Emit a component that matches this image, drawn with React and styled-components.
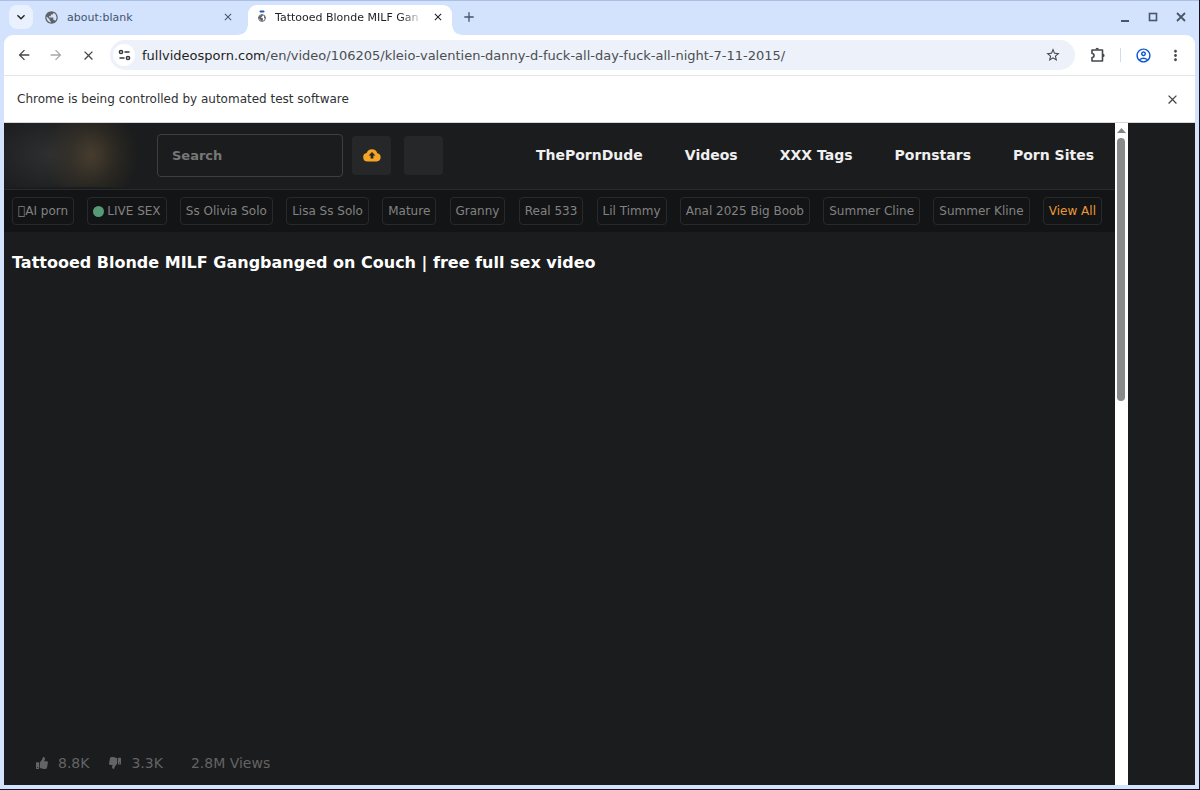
import React from 'react';
import styled, { createGlobalStyle } from 'styled-components';
import {
  MdAdd,
  MdArrowBack,
  MdArrowForward,
  MdClose,
  MdKeyboardArrowDown,
  MdMoreVert,
  MdOutlineAccountCircle,
  MdPublic,
  MdStarBorder,
} from 'react-icons/md';
import { FaThumbsDown, FaThumbsUp } from 'react-icons/fa';

const tags = [
  { title: '\uE000AI porn' },
  { title: 'LIVE SEX', live: true },
  { title: 'Ss Olivia Solo' },
  { title: 'Lisa Ss Solo' },
  { title: 'Mature' },
  { title: 'Granny' },
  { title: 'Real 533' },
  { title: 'Lil Timmy' },
  { title: 'Anal 2025 Big Boob' },
  { title: 'Summer Cline' },
  { title: 'Summer Kline' },
  { title: 'View All', accent: true },
];

const links = ['ThePornDude', 'Videos', 'XXX Tags', 'Pornstars', 'Porn Sites'];

const LoadingGlobe = () => (
  <svg width="10" height="14" viewBox="0 0 10 14">
    <rect x="2.500" y="0.500" width="5" height="2" rx="1" fill="#1a5fb4" />
    <circle cx="5" cy="8" r="3.400" fill="#fff" stroke="#5f6368" strokeWidth="1" />
    <path d="M2 6.500l3-2 1 1-2 2 2 1v2l-2 .5-1-2-2-1z" fill="#5f6368" />
    <path d="M7 5.500l1.500 2-1.500 1z" fill="#5f6368" />
  </svg>
);

const Tune = () => (
  <svg width="13" height="12" viewBox="0 0 13 12" fill="none" stroke="#33363a" strokeWidth="1.500">
    <circle cx="3" cy="3" r="1.600" />
    <path d="M6.500 3H11.500M1.500 9h5" />
    <circle cx="10" cy="9" r="1.600" />
  </svg>
);

const Puzzle = () => (
  <svg width="16" height="16" viewBox="0 0 16 16" fill="none" stroke="#45484c" strokeWidth="1.600" strokeLinejoin="round">
    <path d="M2 3h10.500v11H2v-3.500a2 2 0 0 0 0-4z" />
    <path d="M5.500 2.500a1.700 1.700 0 0 1 3.400 0zM13 6.800a1.600 1.600 0 0 1 0 3.200z" fill="#45484c" stroke="none" />
  </svg>
);

const Cloud = () => (
  <svg width="18" height="14" viewBox="0 0 18 14">
    <path
      d="M4.500 13.500A4.300 4.300 0 0 1 3.600 5 5.600 5.600 0 0 1 14.300 5.200 4.200 4.200 0 0 1 13.800 13.500z"
      fill="#f5a524"
    />
    <path d="M9 4L12.400 7.600H10.400V10.400H7.600V7.600H5.600z" fill="#262728" />
  </svg>
);

const App = () => (
  <Frame>
    <GlobalStyle />
    <TabStrip>
      <TabSearch aria-label="Search tabs"><MdKeyboardArrowDown size={16} /></TabSearch>
      <Tab>
        <MdPublic size={15} color="#5f6368" />
        <TabTitle>about:blank</TabTitle>
        <TabClose aria-label="Close tab"><MdClose size={12} /></TabClose>
      </Tab>
      <Tab $active>
        <LoadingGlobe />
        <TabTitle $fade>Tattooed Blonde MILF Gan</TabTitle>
        <TabClose aria-label="Close tab"><MdClose size={12} /></TabClose>
      </Tab>
      <NewTab aria-label="New tab"><MdAdd size={16} /></NewTab>
      <WindowButtons>
        <WindowButton aria-label="Minimize">
          <svg width="10" height="10" viewBox="0 0 10 10"><path d="M1 9h8" stroke="#4a5568" strokeWidth="2" /></svg>
        </WindowButton>
        <WindowButton aria-label="Maximize">
          <svg width="10" height="10" viewBox="0 0 10 10"><rect x="1.500" y="1.500" width="7" height="7" fill="none" stroke="#4a5568" strokeWidth="1.600" /></svg>
        </WindowButton>
        <WindowButton aria-label="Close">
          <svg width="10" height="10" viewBox="0 0 10 10"><path d="M1 1l8 8M9 1l-8 8" stroke="#4a5568" strokeWidth="1.800" /></svg>
        </WindowButton>
      </WindowButtons>
    </TabStrip>

    <Toolbar>
      <ToolButton aria-label="Back"><MdArrowBack size={16} /></ToolButton>
      <ToolButton aria-label="Forward" disabled><MdArrowForward size={16} /></ToolButton>
      <ToolButton aria-label="Stop"><MdClose size={15} /></ToolButton>
      <Omnibox>
        <SiteInfo aria-label="Site information"><Tune /></SiteInfo>
        <Url>
          <b>fullvideosporn.com</b>
          /en/video/106205/kleio-valentien-danny-d-fuck-all-day-fuck-all-night-7-11-2015/
        </Url>
        <ToolButton aria-label="Bookmark"><MdStarBorder size={16} /></ToolButton>
      </Omnibox>
      <Actions>
        <ToolButton aria-label="Extensions"><Puzzle /></ToolButton>
        <Divider />
        <ToolButton aria-label="Profile" $blue><MdOutlineAccountCircle size={17} /></ToolButton>
        <ToolButton aria-label="Menu"><MdMoreVert size={17} /></ToolButton>
      </Actions>
    </Toolbar>

    <InfoBar>
      Chrome is being controlled by automated test software
      <ToolButton aria-label="Dismiss"><MdClose size={15} /></ToolButton>
    </InfoBar>

    <Viewport>
      <Page>
        <Header>
          <Logo href="#" aria-label="Home" />
          <SearchInput type="text" placeholder="Search" aria-label="Search" />
          <HeaderButton aria-label="Upload"><Cloud /></HeaderButton>
          <HeaderButton aria-label="Account" />
          <Nav>
            {links.map(link => <NavLink href="#" key={link}>{link}</NavLink>)}
          </Nav>
        </Header>
        <TagBar>
          {tags.map(tag => (
            <Tag href="#" key={tag.title} $accent={tag.accent}>
              {tag.live && <Dot />}
              {tag.title}
            </Tag>
          ))}
        </TagBar>
        <Title>Tattooed Blonde MILF Gangbanged on Couch | free full sex video</Title>
        <Stats>
          <Vote><FaThumbsUp size={12} />8.8K</Vote>
          <Vote><ThumbsDown size={12} />3.3K</Vote>
          <Views>2.8M Views</Views>
        </Stats>
      </Page>
      <ScrollTrack>
        <svg width="9" height="5" viewBox="0 0 9 5"><path d="M0 5L4.500 0 9 5z" fill="#858585" /></svg>
        <ScrollThumb />
      </ScrollTrack>
      <Gutter />
    </Viewport>
  </Frame>
);

const GlobalStyle = createGlobalStyle`
  * {
    box-sizing: border-box;
  }
  body {
    margin: 0;
    background: #10141f;
    font-family: 'DejaVu Sans', sans-serif;
  }
  button {
    border: 0;
    padding: 0;
    background: none;
    color: inherit;
    font: inherit;
  }
  a {
    text-decoration: none;
  }
  svg {
    flex: none;
  }
`;

const Frame = styled.div`
  display: flex;
  flex-direction: column;
  height: calc(100vh - 1px);
  margin-right: 1px;
  padding: 0 4px 4px 4px;
  border-top: 1px solid #a9c0e4;
  background: #d3e3fd;
  font-size: 12px;
`;

const TabStrip = styled.div`
  display: flex;
  align-items: center;
  flex: none;
  height: 34px;
  padding: 0 0 2px 5px;
  color: #44546f;
`;

const TabSearch = styled.button`
  display: flex;
  align-items: center;
  justify-content: center;
  width: 24px;
  height: 24px;
  border-radius: 8px;
  background: #e9f1fe;
  color: #1f1f1f;
`;

const Tab = styled.div`
  position: relative;
  display: flex;
  align-items: center;
  gap: 8px;
  width: ${props => (props.$active ? 204 : 215)}px;
  height: 32px;
  padding: 0 ${props => (props.$active ? '8px 4px 9px' : '14px 0 11px')};
  color: ${props => (props.$active ? '#1f1f1f' : '#44546f')};
  font-size: 11px;
  ${props => props.$active && `
    align-self: flex-end;
    height: 30px;
    margin-bottom: -2px;
    padding-bottom: 6px;
    border-radius: 9px 9px 0 0;
    background: #fff;
    &::before,
    &::after {
      content: '';
      position: absolute;
      bottom: 0;
      width: 9px;
      height: 9px;
    }
    &::before {
      right: 100%;
      background: radial-gradient(circle at 0 0, transparent 8px, #fff 9px);
    }
    &::after {
      left: 100%;
      background: radial-gradient(circle at 100% 0, transparent 8px, #fff 9px);
    }
  `}
`;

const TabTitle = styled.span`
  flex: 1;
  white-space: nowrap;
  ${props => props.$fade && 'mask-image: linear-gradient(to right, #000 85%, transparent);'}
`;

const TabClose = styled.button`
  display: flex;
`;

const NewTab = styled.button`
  display: flex;
  margin-left: 9px;
`;

const WindowButtons = styled.div`
  display: flex;
  gap: 18px;
  margin-left: auto;
  padding-right: 9px;
`;

const WindowButton = styled.button`
  display: flex;
`;

const Toolbar = styled.div`
  display: flex;
  align-items: center;
  flex: none;
  height: 41px;
  padding: 0 10px;
  border-bottom: 1px solid #e4e7ea;
  border-radius: 9px 9px 0 0;
  background: #fff;
`;

const ToolButton = styled.button`
  display: flex;
  align-items: center;
  justify-content: center;
  width: 20px;
  height: 24px;
  color: ${props => (props.$blue ? '#0b57d0' : '#45484c')};
  &:disabled {
    color: #a6a8ab;
  }
  ${Toolbar} > & {
    margin-right: 12px;
  }
`;

const Omnibox = styled.div`
  display: flex;
  align-items: center;
  flex: 1;
  height: 30px;
  padding: 0 12px 0 3px;
  border-radius: 15px;
  background: #edf1f9;
`;

const SiteInfo = styled.button`
  display: flex;
  align-items: center;
  justify-content: center;
  width: 22px;
  height: 22px;
  margin-right: 7px;
  border-radius: 11px;
  background: #fff;
`;

const Url = styled.span`
  flex: 1;
  color: #4b4e52;
  font-size: 13px;
  white-space: nowrap;
  b {
    color: #1f1f1f;
    font-weight: normal;
  }
`;

const Actions = styled.div`
  display: flex;
  align-items: center;
  gap: 12px;
  margin-left: 13px;
`;

const Divider = styled.div`
  width: 1px;
  height: 14px;
  background: #d3dbe8;
`;

const InfoBar = styled.div`
  display: flex;
  align-items: center;
  justify-content: space-between;
  flex: none;
  height: 47px;
  padding: 0 13px;
  border-bottom: 1px solid #d5d7da;
  background: #fff;
  color: #303134;
`;

const Viewport = styled.div`
  display: flex;
  flex: 1;
  min-height: 0;
  background: #1b1c1d;
`;

const Page = styled.div`
  display: flex;
  flex-direction: column;
  flex: 1;
  min-width: 0;
  overflow: hidden;
`;

const Header = styled.div`
  display: flex;
  align-items: center;
  flex: none;
  height: 67px;
  padding: 0 21px 2px 0;
  border-bottom: 1px solid #292a2b;
`;

const Logo = styled.a`
  width: 153px;
  height: 64px;
  background:
    radial-gradient(ellipse 46px 52px at 87px 32px, rgba(74, 63, 46, 0.9) 0%, rgba(62, 54, 40, 0.5) 50%, transparent 100%),
    radial-gradient(ellipse 66px 46px at 45px 32px, #2d2f30 0%, transparent 100%);
`;

const SearchInput = styled.input`
  width: 186px;
  height: 43px;
  padding: 0 14px;
  border: 1px solid #3e3f40;
  border-radius: 4px;
  background: #1b1c1d;
  color: #fff;
  font: bold 13px 'DejaVu Sans', sans-serif;
  &::placeholder {
    color: #777;
    opacity: 1;
  }
`;

const HeaderButton = styled.button`
  display: flex;
  align-items: center;
  justify-content: center;
  width: 39px;
  height: 39px;
  margin-left: 9px;
  border-radius: 4px;
  background: #262728;
  & + & {
    margin-left: 13px;
  }
`;

const Nav = styled.nav`
  display: flex;
  gap: 42px;
  margin-left: auto;
`;

const NavLink = styled.a`
  color: #f0f0f0;
  font-size: 14px;
  font-weight: bold;
  white-space: nowrap;
`;

const TagBar = styled.div`
  display: flex;
  align-items: center;
  justify-content: space-between;
  flex: none;
  height: 42px;
  padding: 0 13px 0 8px;
  background: #131415;
`;

const Tag = styled.a`
  display: flex;
  align-items: center;
  height: 28px;
  padding: 0 5px;
  border: 1px solid #27292a;
  border-radius: 4px;
  color: ${props => (props.$accent ? '#e8993a' : '#828282')};
  font-size: 12px;
  white-space: nowrap;
`;

const Dot = styled.span`
  width: 11px;
  height: 11px;
  margin-right: 3px;
  border-radius: 50%;
  background: #579a76;
`;

const Title = styled.h1`
  margin: 21px 8px 0;
  color: #fff;
  font-size: 16px;
  line-height: 20px;
`;

const Stats = styled.div`
  display: flex;
  align-items: center;
  gap: 20px;
  margin-top: auto;
  padding: 0 32px 12px;
  color: #636465;
  font-size: 14px;
  line-height: 20px;
`;

const Vote = styled.span`
  display: flex;
  align-items: center;
  gap: 10px;
`;

const ThumbsDown = styled(FaThumbsDown)`
  transform: scaleX(-1);
`;

const Views = styled.span`
  margin-left: 8px;
`;

const ScrollTrack = styled.div`
  display: flex;
  flex-direction: column;
  align-items: center;
  gap: 5px;
  flex: none;
  width: 13px;
  padding: 5px 1px 0 0;
  background: #fff;
`;

const ScrollThumb = styled.div`
  width: 8px;
  height: 40%;
  border-radius: 4px;
  background: #888a89;
`;

const Gutter = styled.div`
  flex: none;
  width: 67px;
`;

export default App;
